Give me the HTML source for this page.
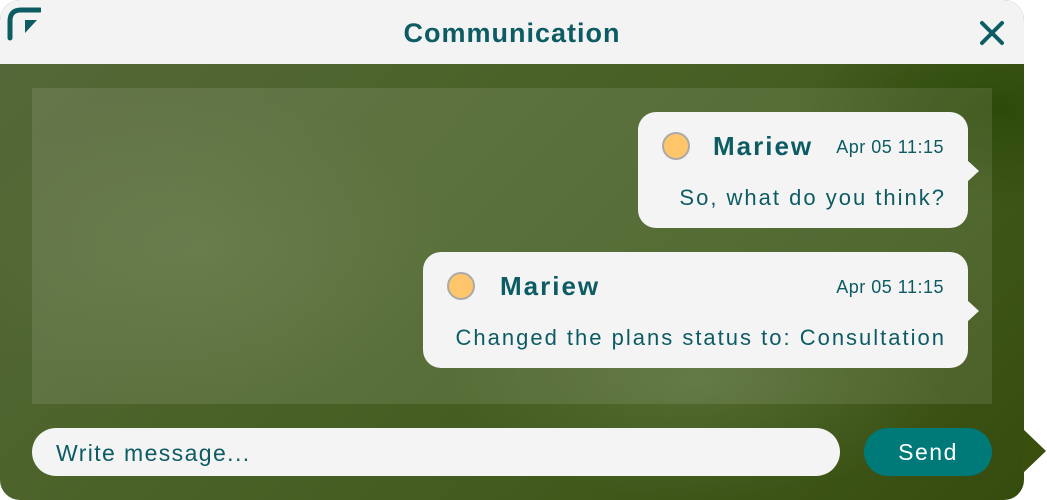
<!DOCTYPE html>
<html><head><meta charset="utf-8"><style>
*{margin:0;padding:0;box-sizing:border-box}
body{width:1047px;height:500px;background:#fff;position:relative;overflow:hidden;font-family:"Liberation Sans",sans-serif;color:#0d5c63}
.win{position:absolute;left:0;top:0;width:1024px;height:500px;border-radius:20px;overflow:hidden;
background:radial-gradient(ellipse 250px 160px at 200px 250px,rgba(120,140,90,.25),transparent),
radial-gradient(ellipse 250px 120px at 700px 380px,rgba(140,160,110,.25),transparent),
radial-gradient(ellipse 200px 100px at 1000px 110px,#2e4a0a,transparent),
linear-gradient(135deg,#56683a 0%,#4a6228 40%,#405a1c 70%,#364c0e 100%)}
.head{position:absolute;left:0;top:0;width:1024px;height:64px;background:#f3f3f3;text-align:center;font-size:27px;font-weight:bold;line-height:66px;color:#0d5c63;letter-spacing:1px}
.panel{position:absolute;left:32px;top:88px;width:960px;height:316px;background:rgba(255,255,255,.1)}
.bub{position:absolute;background:#f4f4f4;border-radius:18px}
.bub:after{content:"";position:absolute;right:-11px;top:48px;border-left:12px solid #f4f4f4;border-top:11px solid transparent;border-bottom:11px solid transparent}
.av{position:absolute;width:28px;height:28px;border-radius:50%;background:#ffc56a;border:2px solid #aaa}
.nm{position:absolute;font-size:26px;font-weight:bold;top:19px;letter-spacing:2px}
.dt{position:absolute;font-size:18px;top:25px;right:24px;letter-spacing:.5px}
.msg{position:absolute;font-size:22px;right:22px;top:73px;white-space:nowrap;letter-spacing:2px}
.inp{position:absolute;left:32px;top:428px;width:808px;height:48px;background:#f4f4f4;border-radius:24px;font-size:23px;line-height:50px;padding-left:24px;color:#0d5c63;letter-spacing:1.4px}
.send{position:absolute;left:864px;top:428px;width:128px;height:48px;background:#007a78;border-radius:24px;color:#fff;font-size:23px;line-height:48px;text-align:center;letter-spacing:1.5px}
</style></head><body>
<div class="win">
<div class="head">Communication
<svg style="position:absolute;left:7px;top:7px" width="34" height="34" viewBox="0 0 34 34"><path d="M3 31V14Q3 3 14 3H33" fill="none" stroke="#0d5c63" stroke-width="5" stroke-linecap="round" stroke-linejoin="round"/><path d="M18 13H30L18 26Z" fill="#0d5c63"/></svg>
<svg style="position:absolute;left:979px;top:20px" width="26" height="26" viewBox="0 0 26 26"><path d="M3 3L23 23M23 3L3 23" stroke="#0d5c63" stroke-width="4" stroke-linecap="round"/></svg>
</div>
<div class="panel"></div>
<div class="bub" style="left:638px;top:112px;width:330px;height:116px">
<div class="av" style="left:24px;top:20px"></div><div class="nm" style="left:75px">Mariew</div><div class="dt">Apr 05 11:15</div><div class="msg">So, what do you think?</div></div>
<div class="bub" style="left:423px;top:252px;width:545px;height:116px">
<div class="av" style="left:24px;top:20px"></div><div class="nm" style="left:77px">Mariew</div><div class="dt">Apr 05 11:15</div><div class="msg">Changed the plans status to: Consultation</div></div>
<div class="inp">Write message...</div>
<div class="send">Send</div>
</div>
<div style="position:absolute;left:1022px;top:428px;width:0;height:0;border-left:24px solid #3a4e0e;border-top:23px solid transparent;border-bottom:23px solid transparent"></div>
</body></html>
